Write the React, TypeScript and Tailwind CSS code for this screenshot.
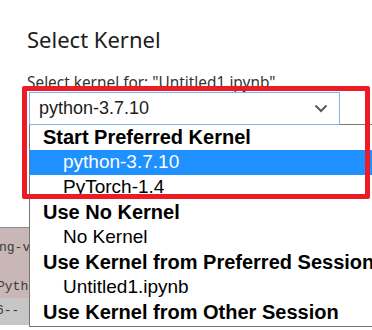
import React from 'react';

type Row = { label: string; group?: boolean; active?: boolean };

const rows: Row[] = [
  { label: 'Start Preferred Kernel', group: true },
  { label: 'python-3.7.10', active: true },
  { label: 'PyTorch-1.4' },
  { label: 'Use No Kernel', group: true },
  { label: 'No Kernel' },
  { label: 'Use Kernel from Preferred Session', group: true },
  { label: 'Untitled1.ipynb' },
  { label: 'Use Kernel from Other Session', group: true },
];

const Chevron = () => (
  <svg width="14" height="9" viewBox="0 0 14 9" fill="none">
    <polyline points="1.5,1.5 7,7 12.5,1.5" stroke="#5a5a5a" strokeWidth="2" />
  </svg>
);

export default function App() {
  return (
    <div className="relative h-[330px] w-[372px] overflow-hidden bg-white font-['Noto_Sans',sans-serif]">
      <div className="px-[27px] pt-[25px]">
        <h1 className="text-[22px] leading-[28px] text-[#202020]">Select Kernel</h1>
        <p className="mt-[19px] text-[15.4px] leading-[21px] text-[#333]">
          Select kernel for: "Untitled1.ipynb"
        </p>
      </div>

      {/* select box */}
      <div className="relative z-20 ml-[29px] -mt-[1px] flex h-[33px] w-[311px] items-center justify-between border border-[#7db5ea] bg-white pl-[9px] pr-[11px] font-['Liberation_Sans',Arial,sans-serif] text-[18px] text-[#202020]">
        <span>python-3.7.10</span>
        <Chevron />
      </div>

      {/* notebook cell behind the dropdown */}
      <div className="mt-[102px] flex h-[98px] flex-col border-t border-[#8c8c8c] font-['Liberation_Mono',monospace] text-[13px] text-[#3a3a3a]">
        <div className="flex h-[70px] flex-col bg-[#c9b6b6] pt-[10px]">
          <span className="-ml-[1px] leading-[20px]">ng-version</span>
          <span className="-ml-[3px] mt-[19px] leading-[20px]">Python</span>
        </div>
        <div className="flex-1 bg-[#c6c6c6] pt-[3px]">
          <span className="-ml-[4px] leading-[20px]">6--</span>
        </div>
      </div>

      {/* open dropdown list */}
      <div className="absolute left-[29px] top-[124px] z-10 w-[370px] border border-[#767676] bg-white pb-[1px] font-['Liberation_Sans',Arial,sans-serif] text-black">
        {rows.map((r) => (
          <div
            key={r.label}
            className={
              r.group
                ? 'h-[25px] whitespace-nowrap pl-[13px] text-[20px] font-bold leading-[24px]'
                : r.active
                  ? 'h-[25px] whitespace-nowrap bg-[#1e90ff] pl-[33px] text-[19px] leading-[24px] text-white'
                  : 'h-[25px] whitespace-nowrap pl-[33px] text-[19px] leading-[24px]'
            }
          >
            {r.label}
          </div>
        ))}
      </div>

      {/* red annotation box */}
      <div className="pointer-events-none absolute left-[22px] top-[86px] z-30 h-[113px] w-[348px] rounded-[2px] border-[5px] border-[#ec1c24]" />
    </div>
  );
}
